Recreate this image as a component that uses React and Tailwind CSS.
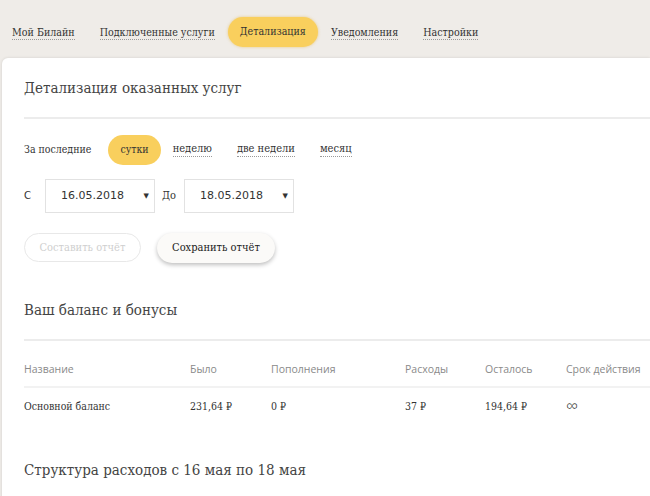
import { useState } from "react";

const slab = "font-['DejaVu_Serif_Condensed','DejaVu_Serif',serif]";

const tabs = ["Мой Билайн", "Подключенные услуги", "Детализация", "Уведомления", "Настройки"];
const periods = ["сутки", "неделю", "две недели", "месяц"];
const cols = [
  { title: "Название", value: "Основной баланс", w: "w-[166px]" },
  { title: "Было", value: "231,64 ₽", w: "w-[81px]" },
  { title: "Пополнения", value: "0 ₽", w: "w-[134px]" },
  { title: "Расходы", value: "37 ₽", w: "w-[80px]" },
  { title: "Осталось", value: "194,64 ₽", w: "w-[81px]" },
  { title: "Срок действия", value: "∞", w: "w-[90px]" },
];

const DateSelect = ({ value }) => (
  <div className="flex h-[34px] w-[110px] items-center justify-between border border-[#e2e2e2] bg-white pl-[15px] pr-[5px] font-['DejaVu_Sans',sans-serif] text-[11px] text-[#333]">
    <span>{value}</span>
    <span className="text-[7px]">▼</span>
  </div>
);

export default function App() {
  const [period, setPeriod] = useState("сутки");
  return (
    <div className={`h-[496px] w-[650px] overflow-hidden bg-[#efece8] ${slab} text-[#333]`}>
      <nav className="flex h-[58px] items-center gap-[25px] pl-[12px] pt-[6px] text-[10.6px]">
        {tabs.map((t) =>
          t === "Детализация" ? (
            <span
              key={t}
              className="-mx-[12px] rounded-full bg-[#f9cf5d] px-[12px] py-[7px] shadow-[0_0_3px_rgba(230,180,60,0.6)]"
            >
              {t}
            </span>
          ) : (
            <span key={t} className="border-b border-dotted border-[#999] leading-[14px]">
              {t}
            </span>
          )
        )}
      </nav>

      <main className="ml-[2px] h-full rounded-tl-[6px] bg-white pl-[22px] shadow-[0_0_3px_rgba(0,0,0,0.12)]">
        <h1 className="pt-[19px] pb-[18px] text-[15px] leading-[22px] text-[#444]">
          Детализация оказанных услуг
        </h1>
        <div className="h-[2px] bg-[#ececec]" />

        <div className="mt-[16px] flex items-center text-[10.5px]">
          <span className="mr-[17px]">За последние</span>
          {periods.map((p) =>
            p === period ? (
              <span
                key={p}
                onClick={() => setPeriod(p)}
                className="mr-[12px] rounded-full bg-[#f9cf5d] px-[12px] py-[7px] text-[10.5px]"
              >
                {p}
              </span>
            ) : (
              <span
                key={p}
                onClick={() => setPeriod(p)}
                className="mr-[25px] border-b border-dotted border-[#999] text-[11px] leading-[14px]"
              >
                {p}
              </span>
            )
          )}
        </div>

        <div className="mt-[14px] flex items-center text-[11px]">
          <span className="w-[21px] font-['DejaVu_Sans',sans-serif] text-[10px]">С</span>
          <DateSelect value="16.05.2018" />
          <span className="w-[29px] pl-[7px]">До</span>
          <DateSelect value="18.05.2018" />
        </div>

        <div className="mt-[20px] flex items-center gap-[16px] text-[11px]">
          <button className="h-[29px] w-[117px] rounded-full border border-[#e8e8e8] text-[#cfcfcf]">
            Составить отчёт
          </button>
          <button className="h-[30px] w-[118px] rounded-full bg-[#fbfaf8] text-[#222] shadow-[0_2px_4px_rgba(0,0,0,0.25)]">
            Сохранить отчёт
          </button>
        </div>

        <h2 className="mt-[36px] pb-[18px] text-[15px] leading-[22px] text-[#444]">
          Ваш баланс и бонусы
        </h2>
        <div className="h-[2px] bg-[#ececec]" />

        <div className="mt-[21px] flex border-b-2 border-[#f2f2f2] pb-[8px] font-['Open_Sans',sans-serif] text-[10.5px] text-[#8a8a8a]">
          {cols.map((c) => (
            <div key={c.title} className={`${c.w} shrink-0`}>
              {c.title}
            </div>
          ))}
        </div>
        <div className="flex pt-[11px] text-[10.5px] text-[#333]">
          {cols.map((c) => (
            <div
              key={c.title}
              className={`${c.w} shrink-0 ${c.value === "∞" ? "font-['Open_Sans',sans-serif] text-[17px] leading-[14px] font-light" : ""}`}
            >
              {c.value}
            </div>
          ))}
        </div>

        <h2 className="mt-[45px] text-[15px] leading-[22px] text-[#444]">
          Структура расходов с 16 мая по 18 мая
        </h2>
      </main>
    </div>
  );
}
